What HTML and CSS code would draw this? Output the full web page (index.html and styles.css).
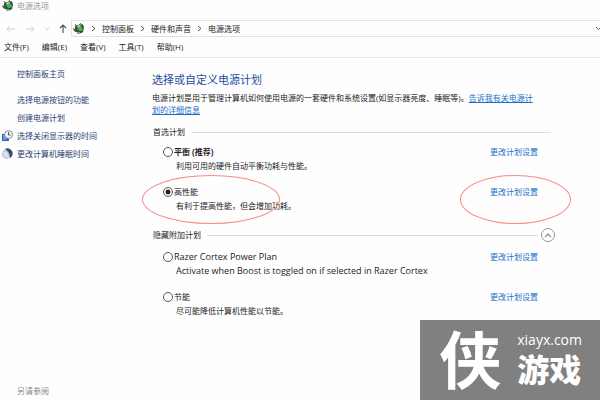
FILE: index.html
```html
<!DOCTYPE html>
<html lang="zh-CN">
<head>
    <meta charset="UTF-8">
    <meta name="viewport" content="width=device-width, initial-scale=1.0">
    <title>电源选项</title>
    <link rel="stylesheet" href="styles.css">
</head>
<body>
    <!-- Shared icons -->
    <svg class="defs" width="0" height="0">
        <symbol id="power" viewBox="0 0 12 12">
            <path d="M3 3 L2 1 M6 2 L8 0" stroke="#777" stroke-width="1"/>
            <path d="M2 4 Q2 2 5 2 L9 1 Q11 2 11 5 L10 9 Q8 11 5 10 L2 8Z" fill="#3d4943"/>
            <path d="M4 4 Q6 2 9 4 L10 7 Q8 9 5 7Z" fill="#35bd4b"/>
            <path d="M4 3 L7 2 L8 3 L5 4Z" fill="#e3eee5"/>
            <path d="M0 5 L4 7 L3 9 L1 8Z" fill="#4b534f"/>
            <path d="M5 9 L7 9 L7 11 L4 11Z" fill="#90a096"/>
        </symbol>
        <symbol id="chevron" viewBox="0 0 5 7">
            <path d="M1 1 L4 3.5 L1 6" fill="none" stroke="#555" stroke-width="1"/>
        </symbol>
    </svg>

    <header class="titlebar">
        <svg class="app-icon" width="12" height="12"><use href="#power"/></svg>
        <span>电源选项</span>
    </header>

    <div class="navbar">
        <div class="nav-buttons">
            <button aria-label="后退"><svg width="10" height="8" viewBox="0 0 10 8"><path d="M9 4 H1 M4 1 L1 4 L4 7" fill="none" stroke="#cfcfcf"/></svg></button>
            <button aria-label="前进"><svg width="10" height="8" viewBox="0 0 10 8"><path d="M1 4 H9 M6 1 L9 4 L6 7" fill="none" stroke="#cfcfcf"/></svg></button>
            <button aria-label="历史记录"><svg width="6" height="4" viewBox="0 0 6 4"><path d="M1 1 L3 3 L5 1" fill="none" stroke="#cfcfcf"/></svg></button>
            <button aria-label="向上"><svg width="8" height="10" viewBox="0 0 8 10"><path d="M4 9 V1 M1 4 L4 1 L7 4" fill="none" stroke="#555" stroke-width="1.2"/></svg></button>
        </div>
        <nav class="address">
            <svg width="12" height="12"><use href="#power"/></svg>
            <svg class="sep" width="5" height="7"><use href="#chevron"/></svg>
            <a href="#">控制面板</a>
            <svg class="sep" width="5" height="7"><use href="#chevron"/></svg>
            <a href="#">硬件和声音</a>
            <svg class="sep" width="5" height="7"><use href="#chevron"/></svg>
            <a href="#">电源选项</a>
            <svg class="drop" width="5" height="5" viewBox="0 0 5 5"><path d="M1 1 L3.5 3.5 L6 1" fill="none" stroke="#555"/></svg>
        </nav>
    </div>

    <nav class="menubar">
        <button>文件(F)</button>
        <button>编辑(E)</button>
        <button>查看(V)</button>
        <button>工具(T)</button>
        <button>帮助(H)</button>
    </nav>

    <div class="content">
        <aside class="sidebar">
            <a class="home" href="#">控制面板主页</a>
            <a href="#">选择电源按钮的功能</a>
            <a href="#">创建电源计划</a>
            <a href="#">
                <svg class="side-icon" width="12" height="12" viewBox="0 0 12 12">
                    <rect x="1" y="4" width="7" height="7" fill="#2b63b8"/>
                    <rect x="2" y="5" width="3" height="5" fill="#5c9be6"/>
                    <circle cx="7.5" cy="4.5" r="4" fill="#f1f3f5" stroke="#8b9198"/>
                    <path d="M7.5 2 V5 H9.5" fill="none" stroke="#555"/>
                </svg>
                <span>选择关闭显示器的时间</span>
            </a>
            <a href="#">
                <svg class="side-icon" width="12" height="12" viewBox="0 0 12 12">
                    <circle cx="6" cy="6" r="5" fill="#b9c5d6"/>
                    <path d="M4 1 A5 5 0 1 1 9 10 Q9 4 4 1Z" fill="#314c75"/>
                    <path d="M4 3 Q8 5 8 10 Q3 10 2 5Z" fill="#dce2eb"/>
                </svg>
                <span>更改计算机睡眠时间</span>
            </a>
            <div class="see-also">另请参阅</div>
        </aside>

        <main class="main">
            <h1>选择或自定义电源计划</h1>
            <p class="intro">电源计划是用于管理计算机如何使用电源的一套硬件和系统设置(如显示器亮度、睡眠等)。<a href="#">告诉我有关电源计划的详细信息</a></p>

            <h2 class="group"><span>首选计划</span></h2>
            <div class="plan">
                <div class="plan-head">
                    <input type="radio" name="plan" id="balanced">
                    <label for="balanced"><b>平衡 (推荐)</b></label>
                    <a href="#">更改计划设置</a>
                </div>
                <p>利用可用的硬件自动平衡功耗与性能。</p>
            </div>
            <div class="plan">
                <div class="plan-head">
                    <input type="radio" name="plan" id="high" checked>
                    <label for="high">高性能</label>
                    <a href="#">更改计划设置</a>
                </div>
                <p>有利于提高性能，但会增加功耗。</p>
                <span class="mark mark-name"></span>
                <span class="mark mark-link"></span>
            </div>

            <h2 class="group group-extra">
                <span>隐藏附加计划</span>
                <button class="toggle" aria-label="隐藏附加计划"><svg width="8" height="6" viewBox="0 0 8 6"><path d="M1 5 L4 2 L7 5" fill="none" stroke="#999" stroke-width="1.4"/></svg></button>
            </h2>
            <div class="plan">
                <div class="plan-head">
                    <input type="radio" name="plan" id="razer">
                    <label class="latin" for="razer">Razer Cortex Power Plan</label>
                    <a href="#">更改计划设置</a>
                </div>
                <p class="latin">Activate when Boost is toggled on if selected in Razer Cortex</p>
            </div>
            <div class="plan">
                <div class="plan-head">
                    <input type="radio" name="plan" id="saver">
                    <label for="saver">节能</label>
                    <a href="#">更改计划设置</a>
                </div>
                <p>尽可能降低计算机性能以节能。</p>
            </div>
        </main>
    </div>

    <div class="watermark">
        <span class="wm-mark">侠</span>
        <div class="wm-text">
            <span class="wm-site">xiayx.com</span>
            <span class="wm-name">游戏</span>
        </div>
    </div>
</body>
</html>
```

FILE: styles.css
```css
* {
    box-sizing: border-box;
}
body {
    margin: 0;
    min-height: 100vh;
    display: flex;
    flex-direction: column;
    position: relative;
    background-color: #fefefe;
    color: #222;
    font-family: "Open Sans", "Noto Sans CJK SC", sans-serif;
    font-size: 8px;
    line-height: 12px;
}
svg {
    display: block;
    flex: none;
}
.defs {
    position: absolute;
}
button {
    padding: 0;
    border: none;
    background: none;
    color: inherit;
    font: inherit;
}
a {
    color: #1a6fc9;
    text-decoration: none;
}
h1, h2, p {
    margin: 0;
    font-size: 8px;
    font-weight: normal;
}

/* Window chrome */
.titlebar {
    display: flex;
    gap: 3px;
    height: 20px;
    padding-left: 2px;
    color: #999;
}
.navbar {
    display: flex;
    height: 17px;
}
.nav-buttons {
    display: flex;
    align-items: center;
    gap: 9px;
    width: 71px;
    padding-left: 6px;
}
.address {
    flex: 1;
    display: flex;
    align-items: center;
    padding-left: 1px;
    border: 1px solid #e2e2e2;
    border-right: none;
}
.address a {
    color: #222;
}
.sep {
    margin: 0 6px;
}
.drop {
    margin-left: auto;
}
.menubar {
    display: flex;
    gap: 13px;
    height: 21px;
    padding: 0 4px;
    border-bottom: 1px solid #e6e6e6;
}

/* Left column */
.content {
    flex: 1;
    display: flex;
}
.sidebar {
    display: flex;
    flex-direction: column;
    gap: 6px;
    width: 152px;
    padding: 10px 0 3px 17px;
}
.sidebar a {
    display: flex;
    align-items: center;
    color: #2b3f73;
}
.sidebar .home {
    margin-bottom: 8px;
}
.side-icon {
    margin-left: -16px;
    margin-right: 4px;
}
.see-also {
    margin-top: auto;
    color: #888;
}

/* Power plans */
.main {
    flex: 1;
    padding: 14px 49px 0 0;
}
h1 {
    color: #1f4a9e;
    font-size: 11px;
    line-height: 16px;
}
.intro {
    margin-top: 4px;
    padding-right: 14px;
}
.intro a {
    text-decoration: underline;
}
.group {
    display: flex;
    align-items: center;
    height: 14px;
    margin: 9px 0 7px 1px;
}
.group::after {
    content: "";
    flex: 1;
    height: 1px;
    margin-left: 6px;
    background-color: #dedede;
}
.group-extra {
    margin-top: 16px;
    margin-bottom: 9px;
}
.toggle {
    order: 1;
    display: flex;
    align-items: center;
    justify-content: center;
    width: 14px;
    height: 14px;
    margin: 0 -4px 0 3px;
    border: 1px solid #999;
    border-radius: 50%;
}
.plan {
    position: relative;
    padding-left: 11px;
}
.plan + .plan {
    margin-top: 14px;
}
.plan-head {
    display: flex;
    align-items: center;
}
.plan-head input {
    appearance: none;
    width: 10px;
    height: 10px;
    margin: 0 1px 0 0;
    border: 1px solid #555;
    border-radius: 50%;
    background-color: #fff;
}
.plan-head input:checked {
    background-image: radial-gradient(circle, #222 2px, transparent 3px);
}
.plan-head a {
    margin-left: auto;
    margin-right: 13px;
}
.plan p {
    margin-top: 2px;
    padding-left: 13px;
}
.plan .latin {
    font-size: 9px;
}

/* Red rings round the chosen plan */
.mark {
    position: absolute;
    top: -11px;
    height: 49px;
    border: 1px solid #f58a8a;
    border-radius: 50%;
    pointer-events: none;
}
.mark-name {
    left: -10px;
    width: 138px;
}
.mark-link {
    right: -20px;
    width: 111px;
}

.watermark {
    position: absolute;
    right: 0;
    bottom: 0;
    display: flex;
    align-items: center;
    justify-content: flex-end;
    gap: 16px;
    width: 180px;
    height: 80px;
    padding-right: 18px;
    background-color: #808080;
    color: #fff;
}
.wm-mark {
    font-size: 62px;
    font-weight: bold;
    line-height: 72px;
}
.wm-text {
    display: flex;
    flex-direction: column;
}
.wm-site {
    font-size: 14px;
    line-height: 20px;
}
.wm-name {
    font-size: 32px;
    font-weight: 900;
    line-height: 40px;
}
```
